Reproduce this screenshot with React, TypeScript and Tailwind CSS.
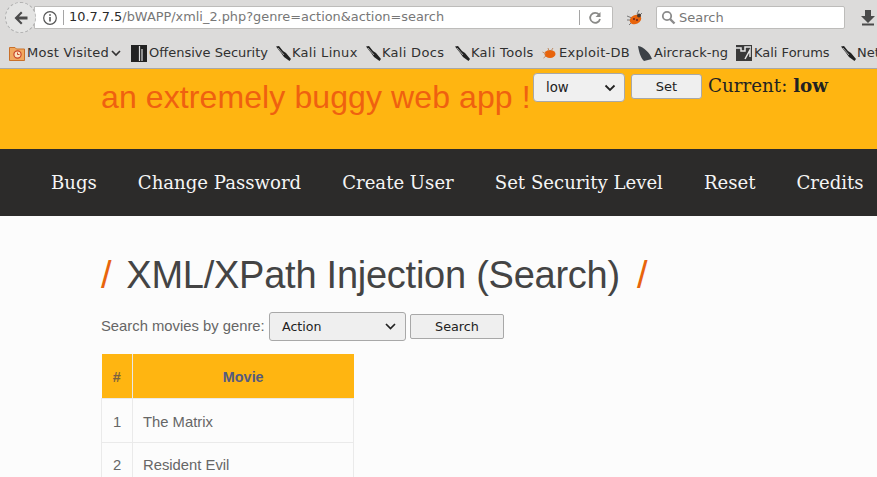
import React from "react";

const sans = "font-['DejaVu_Sans',sans-serif]";

const Feather = () => (
  <svg width="17" height="17" viewBox="0 0 17 17" className="shrink-0">
    <path d="M1 1.5 L4 1 L8 6 L11 8 L16 14 L14.5 16 L9 12 L6.5 8.5 Z" fill="#222" />
    <path d="M3 3 L9 10" stroke="#ddd" strokeWidth="0.7" />
  </svg>
);

function Mark({ label, icon, className, after }: { label: string; icon: React.ReactNode; className: string; after?: React.ReactNode }) {
  return (
    <div className={`flex items-center shrink-0 ${className}`}>
      {icon}
      <span className="whitespace-nowrap">{label}</span>
      {after}
    </div>
  );
}

export default function App() {
  return (
    <div className={`h-[477px] w-[877px] overflow-hidden bg-[#fcfcfc] ${sans}`}>
      <div className="h-[69px] bg-[#dcdbda] border-b border-[#a9a8a6] flex flex-col overflow-hidden">
        <div className="h-[34px] flex items-center pl-[5px] pt-px">
          <div className="w-[31px] h-[31px] rounded-full border border-dashed border-[#b0b0b0] bg-[#e4e4e3] flex items-center justify-center shrink-0 z-10">
            <svg width="16" height="16" viewBox="0 0 16 16"><path d="M1.5 8 L8 1.5 L9.5 3 L6 6.5 H14.5 V9.5 H6 L9.5 13 L8 14.5 Z" fill="#4b4b4b" /></svg>
          </div>
          <div className="w-[579px] h-[23px] -ml-[2px] bg-white border border-[#bdbcba] flex items-center rounded-r-[2px] shrink-0">
            <svg width="16" height="16" viewBox="0 0 16 16" className="ml-[7px] shrink-0">
              <circle cx="8" cy="8" r="6.3" fill="none" stroke="#555" strokeWidth="1.2" />
              <rect x="7.2" y="7" width="1.6" height="4.5" fill="#555" />
              <rect x="7.2" y="4.2" width="1.6" height="1.6" fill="#555" />
            </svg>
            <div className="w-px h-[15px] bg-[#a5a5a5] ml-[5px] shrink-0" />
            <div className="ml-[5px] text-[12.9px] text-[#777] whitespace-nowrap leading-none w-[510px] shrink-0">
              <span className="text-[#2a2a2a]">10.7.7.5</span>/bWAPP/xmli_2.php?genre=action&amp;action=search
            </div>
            <div className="w-px h-[15px] bg-[#a5a5a5] shrink-0" />
            <svg width="14" height="14" viewBox="0 0 14 14" className="ml-[8px] shrink-0">
              <path d="M11 3.6 A5 5 0 1 0 12 8" fill="none" stroke="#8a8a88" strokeWidth="1.8" />
              <path d="M12.5 1 V6 H7.5 Z" fill="#8a8a88" />
            </svg>
          </div>
          <svg width="18" height="18" viewBox="0 0 18 18" className="ml-[13px] shrink-0">
            <path d="M1 7 L6 9 M1 11 L5 11 M3 16 L6 13 M13 1 L11 5 M16 4 L13 7" stroke="#777" strokeWidth="1" />
            <ellipse cx="9.5" cy="10.5" rx="6" ry="4.5" fill="#e8640c" transform="rotate(-25 9.5 10.5)" />
            <circle cx="13" cy="6.5" r="2" fill="#4a3a30" />
            <circle cx="8" cy="10" r="1" fill="#622" />
            <circle cx="11" cy="11" r="1" fill="#622" />
          </svg>
          <div className="ml-[12px] w-[189px] h-[23px] bg-white border border-[#bdbcba] rounded-[2px] flex items-center shrink-0">
            <svg width="15" height="15" viewBox="0 0 15 15" className="ml-[4px] shrink-0">
              <circle cx="6" cy="6" r="4.2" fill="none" stroke="#8b8b8b" strokeWidth="1.8" />
              <path d="M9 9 L13.5 13.5" stroke="#8b8b8b" strokeWidth="2.4" />
            </svg>
            <span className="ml-[3px] text-[13px] text-[#777] leading-none">Search</span>
          </div>
          <svg width="16" height="17" viewBox="0 0 16 17" className="ml-[15px] shrink-0">
            <path d="M5 1 H11 V7 H15 L8 14 L1 7 H5 Z" fill="#4a4a4a" />
            <rect x="2" y="14.5" width="12" height="2" fill="#4a4a4a" />
          </svg>
        </div>
        <div className="h-[34px] flex items-center pl-[9px] text-[13px] text-[#303030] pt-[4px]">
          <Mark
            label="Most Visited"
            className="w-[122px] tracking-[0.25px]"
            icon={
              <svg width="16" height="16" viewBox="0 0 16 16" className="mr-[2px] shrink-0">
                <path d="M0.5 2.5 H6 L7.5 4 H15.5 V15.5 H0.5 Z" fill="#f0a860" stroke="#c9702a" />
                <circle cx="8.5" cy="9.5" r="3.6" fill="#fbe3c0" stroke="#c8452a" strokeWidth="1.2" />
                <path d="M8.5 7.5 V9.5 H10.5" stroke="#c8452a" fill="none" />
              </svg>
            }
            after={
              <svg width="10" height="7" viewBox="0 0 10 7" className="ml-[2px] shrink-0"><path d="M1 1 L5 5 L9 1" fill="none" stroke="#333" strokeWidth="1.7" /></svg>
            }
          />
          <Mark
            label="Offensive Security"
            className="w-[144px]"
            icon={
              <svg width="16" height="17" viewBox="0 0 16 17" className="mr-[2px] shrink-0">
                <rect width="16" height="17" fill="#222" />
                <path d="M8.5 1 V16 M11 4 V16" stroke="#ddd" strokeWidth="1.2" />
              </svg>
            }
          />
          <Mark label="Kali Linux" className="w-[90px] tracking-[0.3px]" icon={<Feather />} />
          <Mark label="Kali Docs" className="w-[89px] tracking-[0.3px]" icon={<Feather />} />
          <Mark label="Kali Tools" className="w-[88px] tracking-[0.3px]" icon={<Feather />} />
          <Mark
            label="Exploit-DB"
            className="w-[95px] tracking-[0.3px]"
            icon={
              <svg width="15" height="15" viewBox="0 0 15 15" className="mr-[2px] shrink-0">
                <ellipse cx="8" cy="8" rx="5.5" ry="4" fill="#e8640c" />
                <path d="M0.5 6 L4 8 M1.5 12 L4 10 M6 2 L7 5 M11 2 L9 5" stroke="#c08a60" />
              </svg>
            }
          />
          <Mark
            label="Aircrack-ng"
            className="w-[99px]"
            icon={
              <svg width="16" height="17" viewBox="0 0 16 17" className="mr-px shrink-0">
                <path d="M1 1 C7 2 13 8 15 14 L7 16 C3 12 2 6 1 1 Z" fill="#3c4147" />
              </svg>
            }
          />
          <Mark
            label="Kali Forums"
            className="w-[104px]"
            icon={
              <svg width="16" height="16" viewBox="0 0 16 16" className="mr-[2px] shrink-0">
                <rect width="16" height="16" fill="#3a3a3a" />
                <path d="M0 3 H5 V6 H9 V2 H15 M9 14 L14 5 V12" stroke="#e6e6e6" strokeWidth="1.5" fill="none" />
              </svg>
            }
          />
          <Mark label="NetHunter" className="" icon={<Feather />} />
        </div>
      </div>

      <div className="h-[80px] bg-[#ffb511] flex items-start relative">
        <div className="pl-[101px] pt-[8px] font-['Liberation_Sans',sans-serif] text-[32px] tracking-[0.1px] leading-[40px] text-[#ef6110] whitespace-nowrap w-[533px]">
          an extremely buggy web app !
        </div>
        <div className="mt-[4px] w-[92px] h-[29px] bg-[#f0f0f0] border border-[#a8a8a8] rounded-[4px] flex items-center justify-between pl-[12px] pr-[8px] text-[13.3px] text-[#222]">
          low
          <svg width="12" height="8" viewBox="0 0 12 8"><path d="M1.5 1.5 L6 6 L10.5 1.5" fill="none" stroke="#222" strokeWidth="1.8" /></svg>
        </div>
        <div className="mt-[5px] ml-[6px] w-[71px] h-[25px] bg-[#efefef] border border-[#a8a8a8] rounded-[3px] flex items-center justify-center text-[13px] text-[#222]">
          Set
        </div>
        <div className="ml-[6px] mt-[5px] font-['DejaVu_Serif',serif] text-[18.3px] leading-[24px] text-[#222] whitespace-nowrap">
          Current: <b>low</b>
        </div>
      </div>

      <div className="h-[67px] bg-[#2c2b2a] flex items-center pl-[51px] pt-px gap-[41px] font-['DejaVu_Serif',serif] text-[18.1px] text-[#f5f5f5] whitespace-nowrap">
        <span>Bugs</span>
        <span>Change Password</span>
        <span>Create User</span>
        <span>Set Security Level</span>
        <span>Reset</span>
        <span>Credits</span>
      </div>

      <div className="pl-[101px] font-['Liberation_Sans',sans-serif] text-[#555]">
        <h1 className="mt-[33px] h-[52px] flex items-center text-[38px] leading-[52px] text-[#444] whitespace-nowrap tracking-[-0.25px]">
          <span className="text-[#e8640c]">/</span>
          <span className="ml-[15px]">XML/XPath Injection (Search)</span>
          <span className="ml-[17px] text-[#e8640c]">/</span>
        </h1>
        <div className="mt-[11px] flex items-center text-[14.8px] h-[29px]">
          <span className="w-[168px] whitespace-nowrap text-[#666]">Search movies by genre:</span>
          <div className="w-[137px] h-[29px] bg-[#efefef] border border-[#a8a8a8] rounded-[3px] flex items-center justify-between pl-[12px] pr-[9px] text-[#222] font-['DejaVu_Sans',sans-serif] text-[12.6px]">
            <span className="pt-px">Action</span>
            <svg width="11" height="7" viewBox="0 0 11 7"><path d="M1 1 L5.5 5.5 L10 1" fill="none" stroke="#222" strokeWidth="1.7" /></svg>
          </div>
          <div className="ml-[4px] w-[94px] h-[25px] bg-[#efefef] border border-[#a8a8a8] rounded-[2px] flex items-center justify-center text-[#222] font-['DejaVu_Sans',sans-serif] text-[12.8px]">
            Search
          </div>
        </div>
        <table className="mt-[13px] w-[253px] border-collapse text-[14.8px] table-fixed">
          <thead>
            <tr className="h-[44px] bg-[#ffb511] text-[14.4px]">
              <th className="w-[31px] border-r border-[#e8e8e8] font-bold text-[#7a6240] pt-[5px]">#</th>
              <th className="font-bold text-[#555a80] pt-[5px]">Movie</th>
            </tr>
          </thead>
          <tbody className="text-[#666]">
            <tr className="h-[44px] border border-[#eaeaea]">
              <td className="border-r border-[#eaeaea] text-center pt-[4px]">1</td>
              <td className="pl-[10px] pt-[4px]">The Matrix</td>
            </tr>
            <tr className="h-[44px] border border-[#eaeaea]">
              <td className="border-r border-[#eaeaea] text-center pt-[3px]">2</td>
              <td className="pl-[10px] pt-[3px]">Resident Evil</td>
            </tr>
          </tbody>
        </table>
      </div>
    </div>
  );
}
